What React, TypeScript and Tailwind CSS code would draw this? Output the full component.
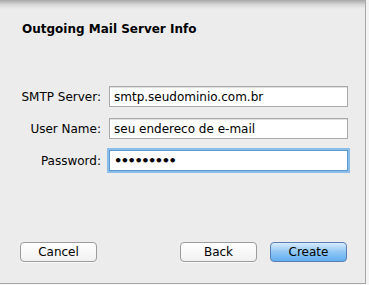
export default function App() {
  const rows = [
    { label: "SMTP Server:", value: "smtp.seudominio.com.br", focus: false },
    { label: "User Name:", value: "seu endereco de e-mail", focus: false },
    { label: "Password:", value: "•••••••••", focus: true },
  ];

  return (
    <div className="h-[285px] w-[369px] overflow-hidden bg-[#f4f4f4] font-['DejaVu_Sans',sans-serif] text-black">
      <div className="relative flex h-[284px] w-[366px] flex-col border-r border-b border-[#a8a8a8] bg-[#ececec]">
        <div className="absolute inset-x-0 top-0 h-[9px] bg-gradient-to-b from-[#a6a6a6] via-[#d6d6d6] to-[#ececec]" />
        <h1 className="relative ml-[22px] mt-[21px] text-[12px] font-bold leading-[16px]">
          Outgoing Mail Server Info
        </h1>

        <div className="mt-[49px] flex flex-col gap-[11px]">
          {rows.map((row) => (
            <div key={row.label} className="flex items-center">
              <span className="w-[101px] text-right text-[12px]">{row.label}</span>
              <div
                className={
                  row.focus
                    ? "ml-[8px] flex h-[21px] w-[239px] items-center border border-[#5a9bd6] bg-white pl-[4px] text-[12px] shadow-[0_0_0_2px_#8cbde8]"
                    : "ml-[8px] flex h-[21px] w-[239px] items-center border border-[#a9a9a9] bg-white pl-[4px] text-[12px] shadow-[inset_0_1px_0_#e2e2e2]"
                }
              >
                {row.focus ? (
                  <span className="text-[13px] font-bold tracking-[-1.5px]">{row.value}</span>
                ) : (
                  row.value
                )}
              </div>
            </div>
          ))}
        </div>

        <div className="mt-auto mb-[21px] flex items-center pl-[20px] pr-[18px]">
          <button className="h-[20px] w-[77px] rounded-[4px] border border-[#9c9c9c] bg-gradient-to-b from-white to-[#f1f1f1] text-[12px] leading-none shadow-[0_1px_0_#f8f8f8]">
            Cancel
          </button>
          <button className="ml-auto h-[20px] w-[77px] rounded-[4px] border border-[#9c9c9c] bg-gradient-to-b from-white to-[#f1f1f1] text-[12px] leading-none shadow-[0_1px_0_#f8f8f8]">
            Back
          </button>
          <button className="ml-[13px] h-[20px] w-[77px] rounded-[4px] border border-[#5a7fb5] bg-gradient-to-b from-[#d8ebfc] via-[#8fc6f4] to-[#62aef0] text-[12px] leading-none">
            Create
          </button>
        </div>
      </div>
    </div>
  );
}
